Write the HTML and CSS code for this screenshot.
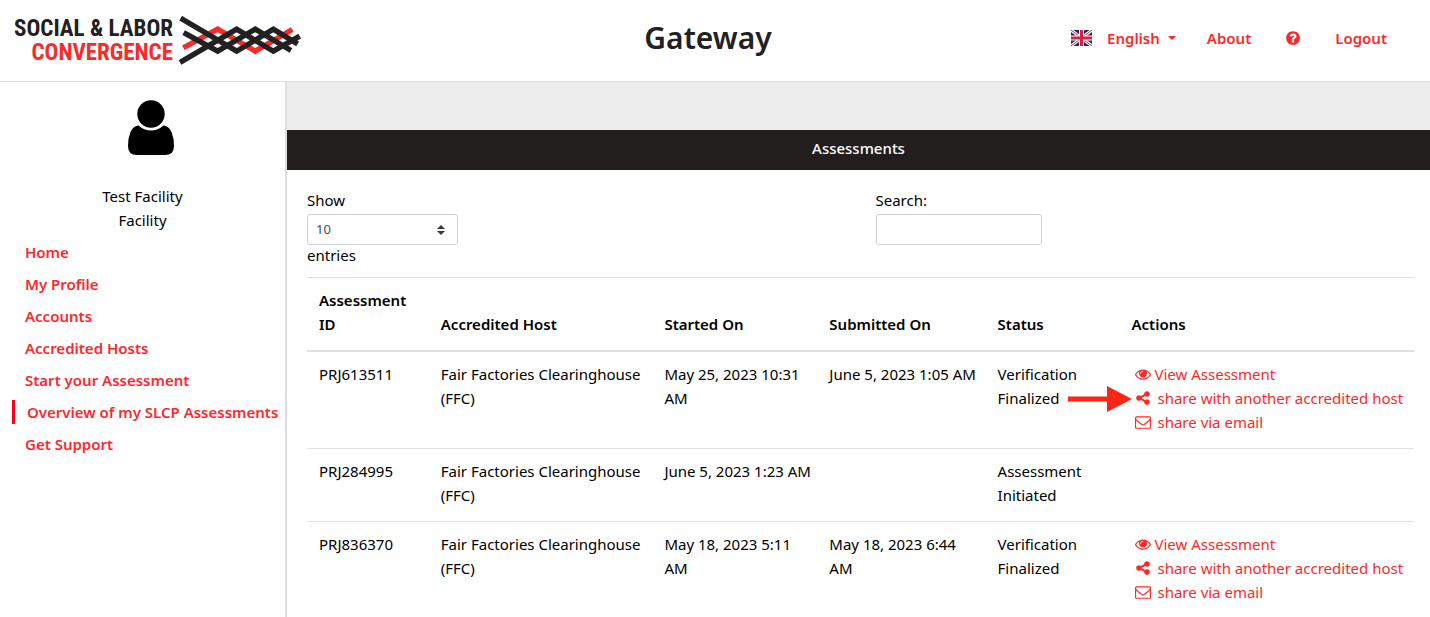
FILE: index.html
```html
<!DOCTYPE html>
<html lang="en">
<head>
<meta charset="utf-8">
<title>Gateway - Assessments</title>
<link rel="stylesheet" href="styles.css">
</head>
<body>
<svg class="symbols" aria-hidden="true">
  <symbol id="eye" viewBox="0 0 1792 1792"><path d="M1664 960q-152-236-381-353 61 104 61 225 0 185-131.500 316.500t-316.500 131.500-316.500-131.500-131.500-316.500q0-121 61-225-229 117-381 353 133 205 333.500 326.500t434.500 121.500 434.500-121.500 333.500-326.500zm-720-384q0-20-14-34t-34-14q-125 0-214.500 89.500t-89.500 214.500q0 20 14 34t34 14 34-14 14-34q0-86 61-147t147-61q20 0 34-14t14-34zm848 384q0 34-20 69-140 230-376.500 368.500t-499.500 138.500-499.500-139-376.500-368q-20-35-20-69t20-69q140-229 376.500-368t499.500-139 499.500 139 376.500 368q20 35 20 69z"/></symbol>
  <symbol id="share" viewBox="0 0 1792 1792"><path d="M1344 1024q133 0 226.500 93.500t93.500 226.500-93.500 226.500-226.500 93.500-226.500-93.500-93.500-226.500q0-12 2-34l-360-180q-92 86-218 86-133 0-226.500-93.500t-93.500-226.500 93.500-226.500 226.500-93.500q126 0 218 86l360-180q-2-22-2-34 0-133 93.500-226.500t226.500-93.500 226.500 93.500 93.500 226.500-93.500 226.500-226.500 93.500q-126 0-218-86l-360 180q2 22 2 34t-2 34l360 180q92-86 218-86z"/></symbol>
  <symbol id="mail" viewBox="0 0 1792 1792"><path d="M1664 1504v-768q-32 36-69 66-268 206-426 338-51 43-83 67t-86.500 48.500-102.500 24.500h-2q-48 0-102.500-24.500t-86.500-48.500-83-67q-158-132-426-338-37-30-69-66v768q0 13 9.500 22.500t22.500 9.500h1472q13 0 22.500-9.500t9.500-22.500zm0-1051v-24.500l-.5-13-3-12.500-5.500-9-9-7.500-14-2.500h-1472q-13 0-22.500 9.500t-9.500 22.500q0 168 147 284 193 152 401 317 6 5 35 29.500t46 37.500 44.500 31.500 50.500 27.500 43 9h2q20 0 43-9t50.500-27.500 44.500-31.500 46-37.500 35-29.500q208-165 401-317 54-43 100.500-115.500t46.500-131.500zm128-37v1088q0 66-47 113t-113 47h-1472q-66 0-113-47t-47-113v-1088q0-66 47-113t113-47h1472q66 0 113 47t47 113z"/></symbol>
  <symbol id="help" viewBox="0 0 1792 1792"><path d="M1024 1376v-192q0-14-9-23t-23-9h-192q-14 0-23 9t-9 23v192q0 14 9 23t23 9h192q14 0 23-9t9-23zm256-672q0-88-55.500-163t-138.500-116-170-41q-243 0-371 213-15 24 8 42l132 100q7 6 19 6 16 0 25-12 53-68 86-92 34-24 86-24 48 0 85.500 26t37.500 59q0 38-20 61t-68 45q-63 28-115.500 86.500t-52.500 125.500v36q0 14 9 23t23 9h192q14 0 23-9t9-23q0-19 21.500-49.500t54.500-49.500q32-18 49-28.500t46-35 44.500-48 28-60.500 12.500-81zm384 192q0 209-103 385.500t-279.500 279.500-385.500 103-385.500-103-279.500-279.500-103-385.500 103-385.500 279.500-279.500 385.500-103 385.500 103 279.500 279.500 103 385.500z"/></symbol>
</svg>

<header class="topbar">
  <a class="logo" href="#" aria-label="Social &amp; Labor Convergence">
    <span class="logo-text"><span>SOCIAL &amp; LABOR</span><span class="logo-red">CONVERGENCE</span></span>
    <svg class="logo-mark" viewBox="24 30 372 152" fill="none" stroke="#222020" stroke-width="16" stroke-linecap="square">
      <path stroke="#fb2a2a" d="M47 124 143 72 256 138 360 77"/>
      <path d="M39 43 200 138 310 72 376 112"/>
      <path d="M48 86 143 138 256 72 356 132"/>
      <path d="M37 168 200 72 310 138 382 97"/>
    </svg>
  </a>
  <h1 class="title">Gateway</h1>
  <nav class="topnav">
    <button class="lang" type="button">
      <svg class="flag" viewBox="0 0 21 16" aria-hidden="true">
        <path fill="#1f2a66" d="M0 0h21v16H0z"/>
        <path stroke="#fff" stroke-width="3" d="M0 0 21 16M21 0 0 16"/>
        <path stroke="#d4213d" stroke-width="1" d="M0 0 21 16M21 0 0 16"/>
        <path stroke="#fff" stroke-width="5" d="M10.500 0v16M0 8h21"/>
        <path stroke="#d4213d" stroke-width="3" d="M10.500 0v16M0 8h21"/>
      </svg>
      <span>English</span><i class="caret"></i>
    </button>
    <a class="about" href="#">About</a>
    <a class="help" href="#" aria-label="Help"><svg class="icon"><use href="#help"/></svg></a>
    <a href="#">Logout</a>
  </nav>
</header>

<div class="layout">
  <aside class="sidebar">
    <svg class="avatar" viewBox="0 0 46 56" aria-hidden="true">
      <circle cx="23" cy="14" r="13.700"/>
      <path d="M10.500 25.500Q16 30.500 23 30.500T35.500 25.500Q40.500 25.500 43.500 32Q46 38 46 46Q46 55 37 55H9Q0 55 0 46Q0 38 2.500 32Q5.500 25.500 10.500 25.500Z"/>
    </svg>
    <p class="who">Test Facility<br>Facility</p>
    <nav class="menu">
      <a href="#">Home</a>
      <a href="#">My Profile</a>
      <a href="#">Accounts</a>
      <a href="#">Accredited Hosts</a>
      <a href="#">Start your Assessment</a>
      <a class="active" href="#">Overview of my SLCP Assessments</a>
      <a href="#">Get Support</a>
    </nav>
  </aside>

  <main class="main">
    <h2 class="panel-title">Assessments</h2>
    <section class="panel">
      <div class="filters">
        <div class="field">
          <label for="length">Show</label>
          <div class="select-wrap">
            <select id="length"><option>10</option><option>25</option><option>50</option></select>
            <svg class="sorter" viewBox="0 0 8 10" aria-hidden="true"><path d="M4 0 8 4H0ZM0 6H8L4 10Z"/></svg>
          </div>
          <span>entries</span>
        </div>
        <div class="field">
          <label for="search">Search:</label>
          <input id="search" type="search">
        </div>
      </div>
      <table class="grid">
        <colgroup><col class="c1"><col class="c2"><col class="c3"><col class="c4"><col class="c5"><col class="c6"></colgroup>
        <thead>
          <tr><th>Assessment ID</th><th>Accredited Host</th><th>Started On</th><th>Submitted On</th><th>Status</th><th>Actions</th></tr>
        </thead>
        <tbody>
          <tr>
            <td>PRJ613511</td><td>Fair Factories Clearinghouse (FFC)</td><td>May 25, 2023 10:31 AM</td><td>June 5, 2023 1:05 AM</td><td>Verification Finalized</td>
            <td class="actions">
              <a class="view" href="#"><svg class="icon"><use href="#eye"/></svg>View Assessment</a>
              <a href="#"><svg class="icon"><use href="#share"/></svg>share with another accredited host</a>
              <a href="#"><svg class="icon"><use href="#mail"/></svg>share via email</a>
              <svg class="arrow" viewBox="0 0 64 26" aria-hidden="true"><path d="M0 10.500H39V0L64 13 39 26V15.500H0Z"/></svg>
            </td>
          </tr>
          <tr>
            <td>PRJ284995</td><td>Fair Factories Clearinghouse (FFC)</td><td>June 5, 2023 1:23 AM</td><td></td><td>Assessment Initiated</td><td></td>
          </tr>
          <tr>
            <td>PRJ836370</td><td>Fair Factories Clearinghouse (FFC)</td><td>May 18, 2023 5:11 AM</td><td>May 18, 2023 6:44 AM</td><td>Verification Finalized</td>
            <td class="actions">
              <a class="view" href="#"><svg class="icon"><use href="#eye"/></svg>View Assessment</a>
              <a href="#"><svg class="icon"><use href="#share"/></svg>share with another accredited host</a>
              <a href="#"><svg class="icon"><use href="#mail"/></svg>share via email</a>
            </td>
          </tr>
        </tbody>
      </table>
    </section>
  </main>
</div>
</body>
</html>
```
FILE: styles.css
```css
* { box-sizing: border-box; }
body {
  margin: 0;
  background: #fff;
  color: #000;
  font: 15px/24px "Noto Sans", sans-serif;
  overflow-x: hidden;
}
a { color: #fb2a2a; text-decoration: none; }
.symbols { display: none; }
.icon { width: 16px; height: 16px; fill: currentColor; flex: none; }

.topbar {
  display: grid;
  grid-template-columns: 1fr auto 1fr;
  align-items: center;
  min-height: 82px;
  padding: 0 28px 0 14px;
  border-bottom: 1px solid #ddd;
}
.logo { display: flex; align-items: center; gap: 5px; }
.logo-text {
  display: flex;
  flex-direction: column;
  align-items: flex-end;
  width: 159px;
  color: #222020;
  font: bold 23px/24px "Roboto Condensed", Roboto, sans-serif;
  white-space: nowrap;
}
.logo-red { color: #fb2a2a; }
.logo-mark { width: 124px; height: 51px; }
.title {
  margin: 0;
  padding-bottom: 6px;
  color: #222020;
  font-size: 30px;
  font-weight: 600;
  line-height: 40px;
}
.topnav {
  display: flex;
  justify-content: flex-end;
  align-items: center;
  margin-right: 15px;
  padding-bottom: 6px;
  font-weight: 600;
}
.lang {
  display: flex;
  align-items: center;
  padding: 0;
  border: 0;
  background: none;
  color: #fb2a2a;
  font: inherit;
}
.flag { width: 21px; height: 16px; margin-right: 15px; }
.caret {
  margin-left: 8px;
  border: 4px solid transparent;
  border-top-color: currentColor;
  border-bottom: 0;
}
.about { margin-left: 31px; }
.help { display: flex; margin: 0 34px; }

.layout { display: flex; min-height: calc(100vh - 82px); }
.sidebar {
  flex: none;
  width: 287px;
  padding: 18px 12px;
  border-right: 2px solid #ddd;
}
.avatar { display: block; width: 46px; height: 56px; margin: 0 auto 28px 116px; }
.who { margin: 0 0 8px; text-align: center; }
.menu { display: flex; flex-direction: column; gap: 8px; font-weight: 600; white-space: nowrap; }
.menu a { padding-left: 13px; }
.menu .active { padding-left: 12px; border-left: 3px solid #ff0019; }

.main { flex: 1; min-width: 0; padding-top: 48px; background: #ededed; }
.panel-title {
  margin: 0;
  padding: 6px 0 10px;
  background: #221e1e;
  color: #fff;
  font-size: 15px;
  font-weight: 500;
  text-align: center;
}
.panel { min-height: calc(100% - 40px); padding: 18px 16px 0 20px; background: #fff; }
.filters { display: grid; grid-template-columns: 1fr 1fr; gap: 30px; margin-bottom: 10px; }
.field { display: flex; flex-direction: column; align-items: flex-start; }
.select-wrap { display: grid; align-items: center; width: 151px; margin: 2px 0 -2px; }
.select-wrap > * { grid-area: 1 / 1; }
select, input {
  width: 166px;
  height: 31px;
  padding: 0 8px 2px;
  border: 1px solid #ced4da;
  border-radius: 3px;
  background: #fff;
  color: #495057;
  font: 13px/20px "Noto Sans", sans-serif;
  appearance: none;
}
select { width: 100%; }
input { margin-top: 2px; }
.sorter { width: 8px; height: 10px; margin-right: 13px; justify-self: end; fill: #343a40; pointer-events: none; }

.grid { width: 100%; table-layout: fixed; border-collapse: separate; border-spacing: 0; }
.c1 { width: 11%; }
.c2 { width: 20.200%; }
.c3 { width: 14.900%; }
.c4 { width: 15.200%; }
.c5 { width: 12.100%; }
.c6 { width: 26.600%; }
th, td { border-top: 1px solid #dee2e6; text-align: left; }
th { padding: 10px 12px 14px; border-bottom: 2px solid #dee2e6; font-weight: 600; vertical-align: bottom; }
td { padding: 10px 4px 14px 12px; vertical-align: top; }
tbody tr:first-child td { border-top: 0; }
.actions { position: relative; white-space: nowrap; }
.actions a { display: flex; align-items: center; gap: 7px; padding-left: 3px; }
.actions .view { gap: 4px; }
.arrow { position: absolute; top: 34px; left: -52px; width: 64px; height: 26px; fill: #ff2414; }
```
